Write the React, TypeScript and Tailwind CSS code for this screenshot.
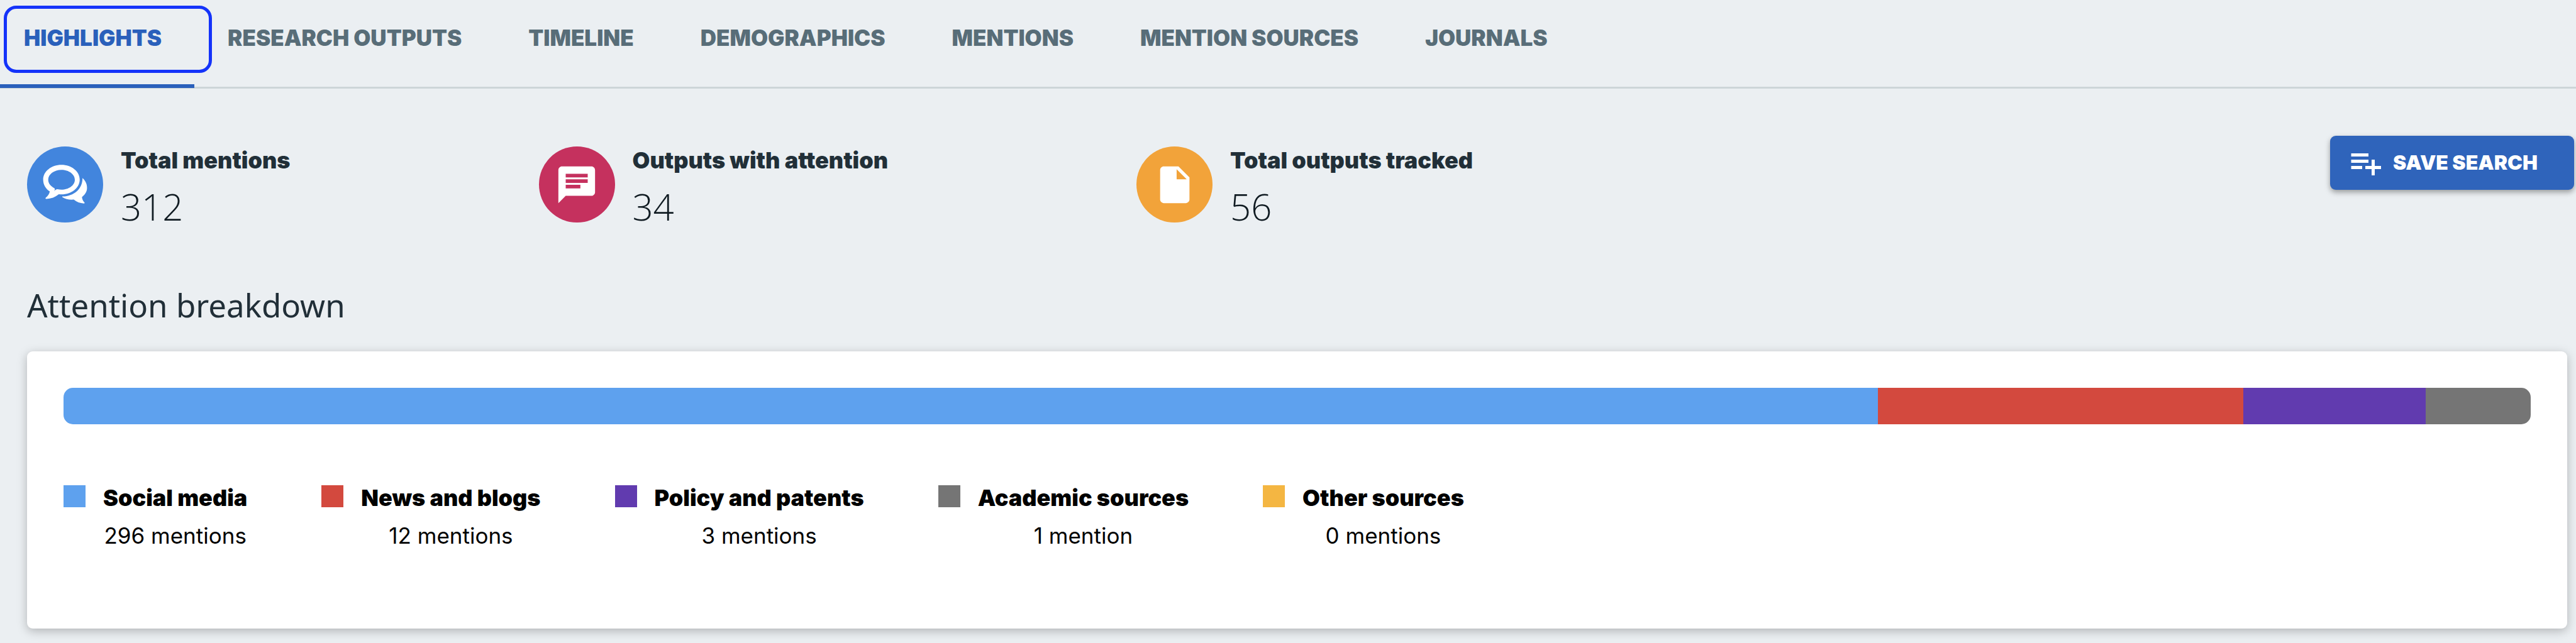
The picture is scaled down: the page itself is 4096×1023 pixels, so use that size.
import React, { useState } from 'react'
import { MdChat, MdInsertDriveFile, MdPlaylistAdd } from 'react-icons/md'

interface Source {
   name: string
   mentions: string
   color: string
   share: number
}

const tabs = [
   'Highlights',
   'Research outputs',
   'Timeline',
   'Demographics',
   'Mentions',
   'Mention sources',
   'Journals',
]

const sources: Source[] = [
   { name: 'Social media', mentions: '296 mentions', color: 'bg-[#5ea1ee]', share: 73.54 },
   { name: 'News and blogs', mentions: '12 mentions', color: 'bg-[#d3493e]', share: 14.8 },
   { name: 'Policy and patents', mentions: '3 mentions', color: 'bg-[#613baf]', share: 7.4 },
   { name: 'Academic sources', mentions: '1 mention', color: 'bg-[#757575]', share: 4.26 },
   { name: 'Other sources', mentions: '0 mentions', color: 'bg-[#f4b642]', share: 0 },
]

const BubblesIcon = () => (
   <svg viewBox="0 0 300 300" className="size-[83px]" fill="currentColor" aria-hidden="true">
      <path
         fillRule="evenodd"
         d="M129 37c58 0 105 38 105 85s-47 85-105 85c-5 0-10 0-15-1-20 17-44 26-72 27-5 0-6-4-3-7 13-11 21-22 23-36-24-15-38-40-38-68 0-47 47-85 105-85zM129 66c-42 0-76 25-76 57 0 21 14 37 36 49 3 4 2 9-1 16 5-6 10-11 18-11 7 2 15 3 23 3 42 0 77-25 77-57s-35-57-77-57z"
      />
      <path d="M250 113c19 17 27 37 26 60-1 20-12 37-29 49 1 13 6 22 14 31 3 4 1 6-3 6-22-1-42-8-58-22-26 2-48-3-65-14-3-2-2-4 2-4 62-1 114-42 113-106z" />
   </svg>
)

const stats = [
   { label: 'Total mentions', value: 312, color: 'bg-[#4285dd]', icon: <BubblesIcon /> },
   { label: 'Outputs with attention', value: 34, color: 'bg-[#c5315e]', icon: <MdChat size={70} /> },
   { label: 'Total outputs tracked', value: 56, color: 'bg-[#f2a33a]', icon: <MdInsertDriveFile size={70} /> },
]

const Tabs = () => {
   const [active, setActive] = useState('Highlights')

   return (
      <nav className="flex border-b-[3px] border-[#cdd5d8]">
         {tabs.map((tab) => (
            <a
               key={tab}
               href="#"
               onClick={() => setActive(tab)}
               className={
                  tab === active
                     ? 'relative -mb-[2px] border-b-[6px] border-[#2a60bb] pt-10 pb-[54px] pl-[38px] pr-[52px] text-[#2a60bb]'
                     : 'pt-10 px-[53px] text-[#586d78]'
               }
            >
               {tab === active && (
                  <span className="absolute left-[6px] -right-7 top-[9px] h-[107px] rounded-[20px] border-[5px] border-[#1433fa]" />
               )}
               <span className="block text-[35px] leading-10 font-black uppercase">{tab}</span>
            </a>
         ))}
      </nav>
   )
}

const App = () => {
   return (
      <div className="min-h-screen bg-[#ebeff2] font-['Inter',sans-serif] text-[#212f38]">
         <Tabs />
         <main className="pl-[43px]">
            <div className="flex items-start justify-between pt-[75px] pr-[3px]">
               <div className="flex gap-[395px] pt-[17px]">
                  {stats.map((stat) => (
                     <div key={stat.label} className="flex gap-[28px]">
                        <div
                           className={`flex size-[121px] items-center justify-center rounded-full text-white ${stat.color}`}
                        >
                           {stat.icon}
                        </div>
                        <div className="pt-[2px]">
                           <div className="text-[36px] leading-10 font-black">{stat.label}</div>
                           <div className="mt-[14px] font-['Open_Sans',sans-serif] text-[58px] leading-[80px] font-light text-[#101b22]">
                              {stat.value}
                           </div>
                        </div>
                     </div>
                  ))}
               </div>
               <button
                  type="button"
                  className="flex h-[86px] items-center gap-[14px] rounded-[9px] bg-[#2f64bb] pl-[26px] pr-[58px] text-[32px] font-black text-white shadow-[0_4px_9px_rgba(0,0,0,0.35)]"
               >
                  <MdPlaylistAdd size={60} />
                  SAVE SEARCH
               </button>
            </div>

            <h2 className="mt-[84px] font-['Noto_Sans',sans-serif] text-[51px] leading-[64px]">
               Attention breakdown
            </h2>

            <section className="mt-[42px] mr-[14px] rounded-[9px] bg-white px-[58px] pt-[58px] pb-[128px] text-black shadow-[0_4px_16px_rgba(0,0,0,0.25)]">
               <div className="flex h-[58px] overflow-hidden rounded-[15px]">
                  {sources.map((source) => (
                     <div key={source.name} className={source.color} style={{ width: `${source.share}%` }} />
                  ))}
               </div>
               <ul className="mt-[97px] flex gap-[118px]">
                  {sources.map((source) => (
                     <li key={source.name} className="flex gap-[28px]">
                        <span className={`size-[35px] ${source.color}`} />
                        <div className="text-center">
                           <div className="text-[36px] leading-10 font-black">{source.name}</div>
                           <div className="mt-5 text-[35px] leading-10">{source.mentions}</div>
                        </div>
                     </li>
                  ))}
               </ul>
            </section>
         </main>
      </div>
   )
}

export default App
